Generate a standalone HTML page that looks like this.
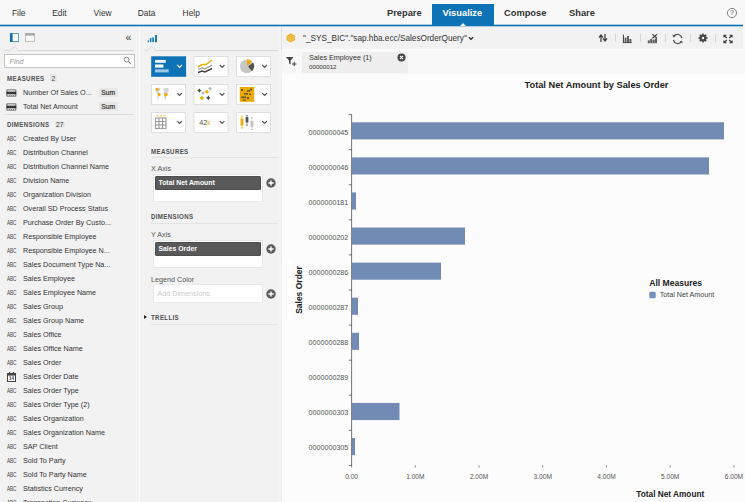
<!DOCTYPE html><html><head><meta charset="utf-8"><title>Visualize</title><style>
html,body{margin:0;padding:0}
body{width:745px;height:502px;overflow:hidden;position:relative;background:#f2f2f2;font-family:"Liberation Sans",Arial,sans-serif;color:#333;font-size:7.2px}
.a{position:absolute;white-space:nowrap;line-height:1}
.menu{font-size:8.4px;top:9px;color:#333}
.tab{font-size:9.3px;font-weight:bold;top:8.9px;color:#333}
.li{left:23px;font-size:7.2px;color:#333}
.abc{left:6.9px;font-size:4.7px;color:#444;letter-spacing:-0.1px;transform:scaleY(1.38);transform-origin:0 0}
.hd{font-size:7.3px;font-weight:bold;color:#505050;letter-spacing:0.42px;transform:scaleX(0.84);transform-origin:0 50%}
.badge{font-size:6.7px;background:#e6e6e6;color:#444;border-radius:1.5px;text-align:center}
.btn{width:34px;height:19.5px;background:#fff;border:0.6px dotted #b8b8b8}
.lbl{font-size:7.2px;color:#555}
.box{background:#fff;border:0.6px solid #e9e9e9}
.pill{background:#595959;box-shadow:inset 0 0 0 0.6px #444;border-radius:2px;color:#fff;font-weight:bold;font-size:6.85px}
.plus{width:9.5px;height:9.5px;border-radius:50%;background:#555}
.ul{height:1px;background:#e3e3e3}
.ax{font-size:6.9px;color:#555}
</style></head><body>
<div class="a" style="left:0;top:0;width:745px;height:24px;background:#f8f8f8"></div>
<div class="a" style="left:0;top:24px;width:743px;height:1px;background:#adcde3"></div><div class="a" style="left:0;top:25px;width:743px;height:1px;background:#0d73b6"></div><div class="a" style="left:0;top:26px;width:743px;height:1px;background:#adcce0"></div>
<div class="a menu" style="left:12px">File</div>
<div class="a menu" style="left:52.2px">Edit</div>
<div class="a menu" style="left:93.6px">View</div>
<div class="a menu" style="left:137.7px">Data</div>
<div class="a menu" style="left:182.6px">Help</div>
<div class="a" style="left:432px;top:3.5px;width:61.5px;height:22.5px;background:#0d73b6"></div>
<div class="a" style="left:459.5px;top:23px;width:0;height:0;border-left:3.5px solid transparent;border-right:3.5px solid transparent;border-bottom:3.5px solid #f2f2f2"></div>
<div class="a tab" style="left:387px;color:#333">Prepare</div>
<div class="a tab" style="left:442.5px;color:#fff">Visualize</div>
<div class="a tab" style="left:504px;color:#333">Compose</div>
<div class="a tab" style="left:569px;color:#333">Share</div>
<svg class="a" style="left:726px;top:7px" width="12" height="12" viewBox="0 0 12 12"><circle cx="6" cy="6" r="4.6" fill="none" stroke="#666" stroke-width="0.8"/><text x="6" y="8.4" font-size="6.8" text-anchor="middle" fill="#555" font-family="Liberation Sans, sans-serif">?</text></svg>
<div class="a" style="left:743px;top:24px;width:2px;height:27px;background:#f9f9f9"></div>
<div class="a" style="left:139px;top:27px;width:1px;height:475px;background:#fbfbfb"></div>
<div class="a" style="left:278px;top:27px;width:3px;height:475px;background:#f4f4f4"></div>
<div class="a" style="left:281px;top:27px;width:1px;height:23px;background:#dedede"></div><div class="a" style="left:281px;top:50px;width:1px;height:452px;background:#f0f0f0"></div>
<svg class="a" style="left:7px;top:31px" width="32" height="14" viewBox="0 0 32 14"><rect x="3.4" y="2.6" width="8" height="8" fill="#fff" stroke="#4a94cc" stroke-width="0.95"/><rect x="3" y="2.2" width="2.6" height="8.8" fill="#0d73b6"/><rect x="18.4" y="2.6" width="9.2" height="8" fill="#f8f8f8" stroke="#b5b5b5" stroke-width="0.8"/><rect x="18" y="2.2" width="10" height="2.4" fill="#a8a8a8"/></svg>
<div class="a" style="left:125.6px;top:31.6px;font-size:10.5px;color:#3a3a3a">&#171;</div>
<svg class="a" style="left:4px;top:46px" width="130" height="6" viewBox="0 0 130 6"><polyline points="0,4.6 6.0,4.6 10.4,0.6 14.8,4.6 130,4.6" fill="none" stroke="#d6d6d6" stroke-width="0.95"/></svg>
<div class="a" style="left:4px;top:54px;width:129px;height:12px;background:#fff;border:0.8px solid #c4c4c4"></div>
<div class="a" style="left:9.5px;top:57.5px;font-size:7.2px;font-style:italic;color:#999">Find</div>
<svg class="a" style="left:123px;top:56px" width="9" height="9" viewBox="0 0 9 9"><circle cx="3.6" cy="3.6" r="2.4" fill="none" stroke="#777" stroke-width="0.8"/><line x1="5.4" y1="5.4" x2="7.8" y2="7.8" stroke="#777" stroke-width="1.1"/></svg>
<div class="a hd" style="left:6.8px;top:74.7px">MEASURES</div>
<div class="a badge" style="left:50px;top:74.3px;width:6.8px;height:7.6px;line-height:9px;overflow:hidden">2</div>
<svg class="a" style="left:6px;top:88.6px" width="11" height="8" viewBox="0 0 11 8"><rect x="0.9" y="0.9" width="9" height="6.2" fill="#fafafa" stroke="#333" stroke-width="0.7"/><rect x="0.6" y="2.6" width="9.6" height="2.7" fill="#2e2e2e"/><g fill="#999"><rect x="3" y="2.6" width="0.5" height="1"/><rect x="5.2" y="2.6" width="0.5" height="1"/><rect x="7.4" y="2.6" width="0.5" height="1"/></g><g fill="#333"><rect x="3" y="6" width="0.5" height="1"/><rect x="5.2" y="6" width="0.5" height="1"/><rect x="7.4" y="6" width="0.5" height="1"/></g></svg>
<div class="a li" style="top:88.8px">Number Of Sales O...</div>
<div class="a badge" style="left:99px;top:88.39999999999999px;width:18.5px;height:8.4px;line-height:9.8px;overflow:hidden;color:#333;-webkit-text-stroke:0.2px #333">Sum</div>
<svg class="a" style="left:6px;top:102.6px" width="11" height="8" viewBox="0 0 11 8"><rect x="0.9" y="0.9" width="9" height="6.2" fill="#fafafa" stroke="#333" stroke-width="0.7"/><rect x="0.6" y="2.6" width="9.6" height="2.7" fill="#2e2e2e"/><g fill="#999"><rect x="3" y="2.6" width="0.5" height="1"/><rect x="5.2" y="2.6" width="0.5" height="1"/><rect x="7.4" y="2.6" width="0.5" height="1"/></g><g fill="#333"><rect x="3" y="6" width="0.5" height="1"/><rect x="5.2" y="6" width="0.5" height="1"/><rect x="7.4" y="6" width="0.5" height="1"/></g></svg>
<div class="a li" style="top:102.8px">Total Net Amount</div>
<div class="a badge" style="left:99px;top:102.39999999999999px;width:18.5px;height:8.4px;line-height:9.8px;overflow:hidden;color:#333;-webkit-text-stroke:0.2px #333">Sum</div>
<div class="a ul" style="left:4px;top:114.2px;width:130px;background:#dedede"></div>
<div class="a hd" style="left:6.8px;top:120.8px">DIMENSIONS</div>
<div class="a badge" style="left:54.5px;top:120.6px;width:10.5px;height:7.6px;line-height:8.4px;overflow:hidden">27</div>
<div class="a abc" style="top:136.7px">ABC</div>
<div class="a li" style="top:135.29999999999998px">Created By User</div>
<div class="a abc" style="top:150.7px">ABC</div>
<div class="a li" style="top:149.29999999999998px">Distribution Channel</div>
<div class="a abc" style="top:164.7px">ABC</div>
<div class="a li" style="top:163.29999999999998px">Distribution Channel Name</div>
<div class="a abc" style="top:178.7px">ABC</div>
<div class="a li" style="top:177.29999999999998px">Division Name</div>
<div class="a abc" style="top:192.7px">ABC</div>
<div class="a li" style="top:191.29999999999998px">Organization Division</div>
<div class="a abc" style="top:206.7px">ABC</div>
<div class="a li" style="top:205.29999999999998px">Overall SD Process Status</div>
<div class="a abc" style="top:220.7px">ABC</div>
<div class="a li" style="top:219.29999999999998px">Purchase Order By Custo...</div>
<div class="a abc" style="top:234.7px">ABC</div>
<div class="a li" style="top:233.29999999999998px">Responsible Employee</div>
<div class="a abc" style="top:248.7px">ABC</div>
<div class="a li" style="top:247.29999999999998px">Responsible Employee N...</div>
<div class="a abc" style="top:262.70000000000005px">ABC</div>
<div class="a li" style="top:261.3px">Sales Document Type Na...</div>
<div class="a abc" style="top:276.70000000000005px">ABC</div>
<div class="a li" style="top:275.3px">Sales Employee</div>
<div class="a abc" style="top:290.70000000000005px">ABC</div>
<div class="a li" style="top:289.3px">Sales Employee Name</div>
<div class="a abc" style="top:304.70000000000005px">ABC</div>
<div class="a li" style="top:303.3px">Sales Group</div>
<div class="a abc" style="top:318.70000000000005px">ABC</div>
<div class="a li" style="top:317.3px">Sales Group Name</div>
<div class="a abc" style="top:332.70000000000005px">ABC</div>
<div class="a li" style="top:331.3px">Sales Office</div>
<div class="a abc" style="top:346.70000000000005px">ABC</div>
<div class="a li" style="top:345.3px">Sales Office Name</div>
<div class="a abc" style="top:360.70000000000005px">ABC</div>
<div class="a li" style="top:359.3px">Sales Order</div>
<svg class="a" style="left:6.5px;top:372.1px" width="9" height="10" viewBox="0 0 9 10"><rect x="0.5" y="1.5" width="8" height="8" fill="#fff" stroke="#444" stroke-width="1"/><rect x="0" y="1" width="9" height="2.6" fill="#444"/><rect x="2" y="0" width="1.2" height="2" fill="#444"/><rect x="5.8" y="0" width="1.2" height="2" fill="#444"/><text x="4.5" y="8.3" font-size="4.6" font-weight="bold" text-anchor="middle" fill="#444" font-family="Liberation Sans, sans-serif">14</text></svg>
<div class="a li" style="top:373.3px">Sales Order Date</div>
<div class="a abc" style="top:388.70000000000005px">ABC</div>
<div class="a li" style="top:387.3px">Sales Order Type</div>
<div class="a abc" style="top:402.70000000000005px">ABC</div>
<div class="a li" style="top:401.3px">Sales Order Type (2)</div>
<div class="a abc" style="top:416.70000000000005px">ABC</div>
<div class="a li" style="top:415.3px">Sales Organization</div>
<div class="a abc" style="top:430.70000000000005px">ABC</div>
<div class="a li" style="top:429.3px">Sales Organization Name</div>
<div class="a abc" style="top:444.70000000000005px">ABC</div>
<div class="a li" style="top:443.3px">SAP Client</div>
<div class="a abc" style="top:458.70000000000005px">ABC</div>
<div class="a li" style="top:457.3px">Sold To Party</div>
<div class="a abc" style="top:472.70000000000005px">ABC</div>
<div class="a li" style="top:471.3px">Sold To Party Name</div>
<div class="a abc" style="top:486.70000000000005px">ABC</div>
<div class="a li" style="top:485.3px">Statistics Currency</div>
<div class="a abc" style="top:500.70000000000005px">ABC</div>
<div class="a li" style="top:499.3px">Transaction Currency</div>
<svg class="a" style="left:147px;top:33px" width="12" height="11" viewBox="0 0 12 11"><g fill="#0d73b6"><rect x="0.8" y="7.4" width="1.2" height="1.8"/><rect x="2.9" y="5" width="1.5" height="4.2"/><rect x="5.3" y="4.4" width="1.6" height="4.8"/><rect x="8.1" y="2" width="1.9" height="7.2"/></g></svg>
<svg class="a" style="left:145px;top:46px" width="133" height="6" viewBox="0 0 133 6"><polyline points="0,4.6 2.199999999999994,4.6 6.599999999999994,0.6 10.999999999999995,4.6 133,4.6" fill="none" stroke="#d6d6d6" stroke-width="0.95"/></svg>
<svg class="a" style="left:140px;top:50px" width="140" height="90" viewBox="140 50 140 90"><rect x="151.2" y="56.3" width="34.9" height="20.5" fill="#0d73b6"/><polyline points="177.30,65.00 179.60,67.40 181.90,65.00" fill="none" stroke="#fff" stroke-width="1.15"/><rect x="194.0" y="56.599999999999994" width="34" height="19.9" fill="#fff" stroke="#cfcfcf" stroke-width="0.6"/><polyline points="219.80,65.00 222.10,67.40 224.40,65.00" fill="none" stroke="#505050" stroke-width="1.15"/><rect x="236.5" y="56.599999999999994" width="34" height="19.9" fill="#fff" stroke="#cfcfcf" stroke-width="0.6"/><polyline points="262.30,65.00 264.60,67.40 266.90,65.00" fill="none" stroke="#505050" stroke-width="1.15"/><rect x="151.5" y="84.64999999999999" width="34" height="19.9" fill="#fff" stroke="#cfcfcf" stroke-width="0.6"/><polyline points="177.30,93.05 179.60,95.45 181.90,93.05" fill="none" stroke="#505050" stroke-width="1.15"/><rect x="194.0" y="84.64999999999999" width="34" height="19.9" fill="#fff" stroke="#cfcfcf" stroke-width="0.6"/><polyline points="219.80,93.05 222.10,95.45 224.40,93.05" fill="none" stroke="#505050" stroke-width="1.15"/><rect x="236.5" y="84.64999999999999" width="34" height="19.9" fill="#fff" stroke="#cfcfcf" stroke-width="0.6"/><polyline points="262.30,93.05 264.60,95.45 266.90,93.05" fill="none" stroke="#505050" stroke-width="1.15"/><rect x="151.5" y="112.7" width="34" height="19.9" fill="#fff" stroke="#cfcfcf" stroke-width="0.6"/><polyline points="177.30,121.10 179.60,123.50 181.90,121.10" fill="none" stroke="#505050" stroke-width="1.15"/><rect x="194.0" y="112.7" width="34" height="19.9" fill="#fff" stroke="#cfcfcf" stroke-width="0.6"/><polyline points="219.80,121.10 222.10,123.50 224.40,121.10" fill="none" stroke="#505050" stroke-width="1.15"/><rect x="236.5" y="112.7" width="34" height="19.9" fill="#fff" stroke="#cfcfcf" stroke-width="0.6"/><polyline points="262.30,121.10 264.60,123.50 266.90,121.10" fill="none" stroke="#505050" stroke-width="1.15"/></svg>
<svg class="a" style="left:154px;top:59px" width="18" height="15" viewBox="0 0 18 15"><rect x="1" y="0.9" width="10.8" height="2.9" fill="#fff" opacity="0.92"/><rect x="1" y="5.5" width="8.4" height="3.1" fill="#fff"/><rect x="1" y="10.3" width="13.7" height="3.1" fill="#9cc8e6"/></svg>
<svg class="a" style="left:196.5px;top:59px" width="18" height="15" viewBox="0 0 18 15"><polyline points="1,8 5,5.5 9,5.5 15,1" fill="none" stroke="#f0ab00" stroke-width="1.5"/><polyline points="1,10.5 5,9 8,10 15,6" fill="none" stroke="#999" stroke-width="1.2"/><polyline points="1,13.5 5,12 8,13 15,9.5" fill="none" stroke="#444" stroke-width="1.4"/></svg>
<svg class="a" style="left:239px;top:59px" width="18" height="15" viewBox="0 0 18 15"><circle cx="7.8" cy="7.4" r="6.8" fill="#c6c6c6"/><path d="M8,7 L8,0.2 A7,7 0 0 1 13,2.4 Z" fill="#f0ab00"/><path d="M9,7.6 L14,3.4 A6.8,6.8 0 0 1 13,12.2 Z" fill="#555"/></svg>
<svg class="a" style="left:154px;top:87px" width="18" height="15" viewBox="0 0 18 15"><path d="M1.2,1.2 L6.6,0.8 L6,3.2 L4.6,4.6 L5.4,6 L5.6,8.6 L4.6,10.6 L4,12.6 L3.2,12.6 L3.4,8 L2.4,5.4 L1.2,3.4 Z" fill="#d6d6d6"/><path d="M9,2 L11.6,0.8 L14.6,1 L14.8,4 L13.6,5.4 L14,7.6 L12.2,9 L11.8,12.4 L10.6,12.4 L10.2,8 L9.2,6 L10,4 Z" fill="#d6d6d6"/><circle cx="3.2" cy="2.2" r="1.4" fill="#f0ab00"/><circle cx="5.2" cy="7.6" r="1.5" fill="#f0ab00"/><circle cx="11.8" cy="7.8" r="1.8" fill="#f0ab00"/></svg>
<svg class="a" style="left:196.5px;top:87px" width="18" height="15" viewBox="0 0 18 15"><path d="M2.4,1.4 L3.324,2.676 L4.6,3.6 L3.324,4.524 L2.4,5.800000000000001 L1.476,4.524 L0.19999999999999973,3.6 L1.476,2.676 Z" fill="#4a4a4a"/><path d="M6,4 L6.84,5.16 L8,6 L6.84,6.84 L6,8 L5.16,6.84 L4,6 L5.16,5.16 Z" fill="#b4b4b4"/><path d="M9.9,2.4000000000000004 L10.866,3.7340000000000004 L12.2,4.7 L10.866,5.666 L9.9,7.0 L8.934000000000001,5.666 L7.6000000000000005,4.7 L8.934000000000001,3.7340000000000004 Z" fill="#f0ab00"/><path d="M13.1,-0.40000000000000013 L13.982,0.818 L15.2,1.7 L13.982,2.582 L13.1,3.8 L12.218,2.582 L11.0,1.7 L12.218,0.818 Z" fill="#b8b8c4"/><path d="M4.8,8.7 L5.808,10.091999999999999 L7.199999999999999,11.1 L5.808,12.108 L4.8,13.5 L3.792,12.108 L2.4,11.1 L3.792,10.091999999999999 Z" fill="#f0ab00"/><path d="M11.3,8.600000000000001 L12.224,9.876000000000001 L13.5,10.8 L12.224,11.724 L11.3,13.0 L10.376000000000001,11.724 L9.100000000000001,10.8 L10.376000000000001,9.876000000000001 Z" fill="#4a4a4a"/></svg>
<svg class="a" style="left:239px;top:87px" width="18" height="15" viewBox="0 0 18 15"><rect x="0.8" y="-0.2" width="14.4" height="15" fill="#eba800"/><g fill="#6b5a2a"><rect x="2" y="2" width="2" height="2"/><rect x="8" y="3" width="3" height="1.6"/><rect x="11" y="1.5" width="2" height="2"/><rect x="5" y="6" width="4" height="1.6"/><rect x="10" y="6.5" width="2" height="1.5"/><rect x="2" y="9.5" width="5" height="1.6"/><rect x="8" y="10" width="2" height="2"/><rect x="4" y="12.5" width="3" height="1.2"/></g></svg>
<svg class="a" style="left:154px;top:115px" width="18" height="15" viewBox="0 0 18 15"><g stroke="#f0ab00" stroke-width="0.9"><line x1="2.5" y1="0.8" x2="4.5" y2="0.8"/><line x1="6" y1="0.8" x2="8" y2="0.8"/><line x1="9.5" y1="0.8" x2="11.5" y2="0.8"/></g><g fill="none" stroke="#a0a0a0" stroke-width="1.15"><rect x="1.5" y="3" width="10.5" height="10.5"/><line x1="5" y1="3" x2="5" y2="13.5"/><line x1="8.5" y1="3" x2="8.5" y2="13.5"/><line x1="1.5" y1="6.5" x2="12" y2="6.5"/><line x1="1.5" y1="10" x2="12" y2="10"/></g></svg>
<div class="a" style="left:199.3px;top:118.7px;font-size:7.2px;color:#555">42<span style="color:#f0ab00;font-size:6.5px">k</span></div>
<svg class="a" style="left:239px;top:115px" width="18" height="15" viewBox="0 0 18 15"><path d="M3,1 V13 M1.8,1 H4.2 M1.8,13 H4.2" stroke="#f0ab00" stroke-width="0.6" fill="none"/><rect x="1.6" y="3.5" width="2.8" height="7" fill="#f0ab00"/><path d="M8,0.5 V10.2 M6.8,0.5 H9.2 M6.8,10.2 H9.2" stroke="#555" stroke-width="0.6" fill="none"/><rect x="6.6" y="2" width="2.8" height="5.5" fill="#555"/><path d="M13,2.5 V14.5 M11.8,2.5 H14.2 M11.8,14.5 H14.2" stroke="#b4b4b4" stroke-width="0.6" fill="none"/><rect x="11.6" y="6" width="2.8" height="5.8" fill="#c2c2c2"/></svg>
<div class="a hd" style="left:151px;top:147.5px">MEASURES</div>
<div class="a ul" style="left:151px;top:157px;width:127px"></div>
<div class="a lbl" style="left:151px;top:164.5px">X Axis</div>
<div class="a box" style="left:153px;top:174px;width:108.4px;height:25.6px"></div>
<div class="a pill" style="left:155px;top:176px;width:106px;height:14px;line-height:14px"><span style="margin-left:3.5px">Total Net Amount</span></div>
<svg class="a" style="left:265.5px;top:178.2px" width="10" height="10" viewBox="0 0 10 10"><circle cx="5" cy="5" r="4.7" fill="#5c5c5c"/><path d="M5,2.4 V7.6 M2.4,5 H7.6" stroke="#fff" stroke-width="1.4"/></svg>
<div class="a hd" style="left:151px;top:213px">DIMENSIONS</div>
<div class="a ul" style="left:151px;top:223px;width:127px"></div>
<div class="a lbl" style="left:151px;top:230.5px">Y Axis</div>
<div class="a box" style="left:153px;top:240px;width:108.4px;height:25.6px"></div>
<div class="a pill" style="left:155px;top:242px;width:106px;height:14px;line-height:14px"><span style="margin-left:3.5px">Sales Order</span></div>
<svg class="a" style="left:265.5px;top:244px" width="10" height="10" viewBox="0 0 10 10"><circle cx="5" cy="5" r="4.7" fill="#5c5c5c"/><path d="M5,2.4 V7.6 M2.4,5 H7.6" stroke="#fff" stroke-width="1.4"/></svg>
<div class="a lbl" style="left:151px;top:275.5px">Legend Color</div>
<div class="a box" style="left:153px;top:284.2px;width:108.4px;height:16.8px"></div>
<div class="a" style="left:157.5px;top:290px;font-size:7.2px;color:#ccc">Add Dimensions</div>
<svg class="a" style="left:265.5px;top:288.5px" width="10" height="10" viewBox="0 0 10 10"><circle cx="5" cy="5" r="4.7" fill="#5c5c5c"/><path d="M5,2.4 V7.6 M2.4,5 H7.6" stroke="#fff" stroke-width="1.4"/></svg>
<div class="a" style="left:143.5px;top:315px;width:0;height:0;border-top:2.2px solid transparent;border-bottom:2.2px solid transparent;border-left:3px solid #222"></div>
<div class="a hd" style="left:151px;top:314px">TRELLIS</div>
<div class="a ul" style="left:151px;top:324px;width:127px"></div>
<div class="a" style="left:282px;top:48px;width:463px;height:1px;background:#f4f4f4"></div><div class="a" style="left:282px;top:49px;width:463px;height:2px;background:#fbfbfb"></div>
<div class="a" style="left:282px;top:51px;width:463px;height:23px;background:#f8f8f8"></div>
<div class="a" style="left:282px;top:74px;width:463px;height:428px;background:#fcfcfc"></div>
<svg class="a" style="left:286.4px;top:33.4px" width="9.6" height="10" viewBox="0 0 11 11"><path d="M5.5,0.3 L10.2,2.9 L10.2,8.1 L5.5,10.7 L0.8,8.1 L0.8,2.9 Z" fill="#e9a915"/><path d="M5.5,5.5 V10.5 M0.9,3 L5.5,5.5 L10.1,3" fill="none" stroke="#f7dc9a" stroke-width="0.7"/><path d="M3.2,1.7 L7.8,4.2 V9.2 M7.8,1.7 L3.2,4.2 V9.2 M0.9,5.6 L5.5,8.1 L10.1,5.6" fill="none" stroke="#f7dc9a" stroke-width="0.45"/></svg>
<div class="a" style="left:303px;top:35.3px;font-size:8.22px;color:#333">"_SYS_BIC"."sap.hba.ecc/SalesOrderQuery"</div>
<svg class="a" style="left:468px;top:35.6px" width="6" height="5" viewBox="0 0 7 6"><polyline points="1,1.5 3.5,4 6,1.5" fill="none" stroke="#222" stroke-width="1.5"/></svg>
<div class="a" style="left:615px;top:34px;width:1px;height:8px;background:#d6d6d6"></div>
<div class="a" style="left:640px;top:34px;width:1px;height:8px;background:#d6d6d6"></div>
<div class="a" style="left:665px;top:34px;width:1px;height:8px;background:#d6d6d6"></div>
<div class="a" style="left:690px;top:34px;width:1px;height:8px;background:#d6d6d6"></div>
<div class="a" style="left:715px;top:34px;width:1px;height:8px;background:#d6d6d6"></div>
<svg class="a" style="left:598px;top:33px" width="10" height="10" viewBox="0 0 10 10"><path d="M3,9 V2.5 M1,4.5 L3,2 L5,4.5" fill="none" stroke="#444" stroke-width="1.3"/><path d="M7,1 V7.5 M5,5.5 L7,8 L9,5.5" fill="none" stroke="#444" stroke-width="1.3"/></svg>
<svg class="a" style="left:622px;top:33px" width="11" height="11" viewBox="0 0 11 11"><g fill="#4a4a4a"><rect x="0.9" y="1.6" width="1.1" height="8.4"/><rect x="2.6" y="4.6" width="2" height="5.4" opacity="0.85"/><rect x="5" y="3" width="2" height="7" opacity="0.85"/><rect x="7.4" y="6" width="2" height="4" opacity="0.85"/><rect x="0.9" y="9.2" width="8.6" height="0.9"/></g></svg>
<svg class="a" style="left:647px;top:33px" width="11" height="11" viewBox="0 0 11 11"><g fill="#4a4a4a" opacity="0.9"><rect x="0.8" y="7.4" width="2" height="2.8"/><rect x="3.2" y="5.8" width="2" height="4.4"/><rect x="5.6" y="6.6" width="2" height="3.6"/><rect x="8" y="5.4" width="2" height="4.8"/></g><path d="M5.4,1.4 L10,5.2 M10,1.4 L5.4,5.2" stroke="#3a3a3a" stroke-width="1.2"/></svg>
<svg class="a" style="left:671.3px;top:32.6px" width="13.2" height="12" viewBox="0 0 11 10"><path d="M9,4.2 A3.7,3.7 0 0 0 2.2,3" fill="none" stroke="#555" stroke-width="1"/><path d="M2,5.8 A3.7,3.7 0 0 0 8.8,7" fill="none" stroke="#555" stroke-width="1"/><path d="M1.2,1.2 L1.8,3.6 L4,3 Z M9.8,8.8 L9.2,6.4 L7,7 Z" fill="#555"/></svg>
<svg class="a" style="left:698px;top:33px" width="10" height="10" viewBox="0 0 10 10"><circle cx="5" cy="5" r="2.6" fill="none" stroke="#444" stroke-width="1.9"/><g stroke="#444" stroke-width="1.5"><line x1="5" y1="0.5" x2="5" y2="9.5"/><line x1="0.5" y1="5" x2="9.5" y2="5"/><line x1="1.8" y1="1.8" x2="8.2" y2="8.2"/><line x1="8.2" y1="1.8" x2="1.8" y2="8.2"/></g><circle cx="5" cy="5" r="1.2" fill="#f2f2f2"/></svg>
<svg class="a" style="left:723.4px;top:33.6px" width="10" height="10" viewBox="0 0 10 10"><g fill="none" stroke="#3a3a3a" stroke-width="1.05"><path d="M0.9,3.6 V1.3 H3.4 M1.1,1.5 L3.9,4"/><path d="M9.1,3.6 V1.3 H6.6 M8.9,1.5 L6.1,4"/><path d="M0.9,6.4 V8.7 H3.4 M1.1,8.5 L3.9,6"/><path d="M9.1,6.4 V8.7 H6.6 M8.9,8.5 L6.1,6"/></g></svg>
<svg class="a" style="left:284.5px;top:56px" width="12" height="11" viewBox="0 0 12 11"><path d="M1,1 H8.5 L5.6,4.5 V8.5 L4,7.2 V4.5 Z" fill="#444"/><path d="M9.2,5.8 V10.2 M7,8 H11.4" stroke="#444" stroke-width="1"/></svg>
<div class="a" style="left:302px;top:51.5px;width:106px;height:21.5px;background:#eeeeee;border-radius:1.5px"></div>
<div class="a" style="left:309px;top:54px;font-size:7.2px;color:#333">Sales Employee (1)</div>
<div class="a" style="left:309px;top:64.1px;font-size:6.2px;color:#333">00000012</div>
<svg class="a" style="left:397.4px;top:52.8px" width="9" height="9" viewBox="0 0 9 9"><circle cx="4.5" cy="4.5" r="4" fill="#444"/><path d="M2.9,2.9 L6.1,6.1 M6.1,2.9 L2.9,6.1" stroke="#fff" stroke-width="1.1"/></svg>
<div class="a" style="left:446.5px;top:81px;width:300px;text-align:center;font-size:9.25px;font-weight:bold;color:#222">Total Net Amount by Sales Order</div>
<div class="a" style="left:287.2px;top:259.6px;width:5.2px;height:61.4px;background:#fff"></div>
<div class="a" style="left:299.2px;top:290px;font-size:8.5px;font-weight:bold;color:#222;transform:translate(-50%,-50%) rotate(-90deg)">Sales Order</div>
<svg class="a" style="left:282px;top:74px" width="463" height="428" viewBox="282 74 463 428"><line x1="351.6" y1="114.19999999999999" x2="351.6" y2="466.0" stroke="#4a4a4a" stroke-width="0.75"/><line x1="348.8" y1="114.60" x2="351.6" y2="114.60" stroke="#4a4a4a" stroke-width="0.75"/><line x1="348.8" y1="149.68" x2="351.6" y2="149.68" stroke="#4a4a4a" stroke-width="0.75"/><line x1="348.8" y1="184.76" x2="351.6" y2="184.76" stroke="#4a4a4a" stroke-width="0.75"/><line x1="348.8" y1="219.84" x2="351.6" y2="219.84" stroke="#4a4a4a" stroke-width="0.75"/><line x1="348.8" y1="254.92" x2="351.6" y2="254.92" stroke="#4a4a4a" stroke-width="0.75"/><line x1="348.8" y1="290.00" x2="351.6" y2="290.00" stroke="#4a4a4a" stroke-width="0.75"/><line x1="348.8" y1="325.08" x2="351.6" y2="325.08" stroke="#4a4a4a" stroke-width="0.75"/><line x1="348.8" y1="360.16" x2="351.6" y2="360.16" stroke="#4a4a4a" stroke-width="0.75"/><line x1="348.8" y1="395.24" x2="351.6" y2="395.24" stroke="#4a4a4a" stroke-width="0.75"/><line x1="348.8" y1="430.32" x2="351.6" y2="430.32" stroke="#4a4a4a" stroke-width="0.75"/><line x1="348.8" y1="465.40" x2="351.6" y2="465.40" stroke="#4a4a4a" stroke-width="0.75"/><rect x="352" y="122.30" width="372" height="17.1" fill="#718bb5"/><text x="348.3" y="134.70" font-size="7.15" text-anchor="end" fill="#555" font-family="Liberation Sans, sans-serif">0000000045</text><rect x="352" y="157.38" width="357" height="17.1" fill="#718bb5"/><text x="348.3" y="169.78" font-size="7.15" text-anchor="end" fill="#555" font-family="Liberation Sans, sans-serif">0000000046</text><rect x="352" y="192.46" width="4" height="17.1" fill="#718bb5"/><text x="348.3" y="204.86" font-size="7.15" text-anchor="end" fill="#555" font-family="Liberation Sans, sans-serif">0000000181</text><rect x="352" y="227.54" width="113" height="17.1" fill="#718bb5"/><text x="348.3" y="239.94" font-size="7.15" text-anchor="end" fill="#555" font-family="Liberation Sans, sans-serif">0000000202</text><rect x="352" y="262.62" width="89" height="17.1" fill="#718bb5"/><text x="348.3" y="275.02" font-size="7.15" text-anchor="end" fill="#555" font-family="Liberation Sans, sans-serif">0000000286</text><rect x="352" y="297.70" width="6" height="17.1" fill="#718bb5"/><text x="348.3" y="310.10" font-size="7.15" text-anchor="end" fill="#555" font-family="Liberation Sans, sans-serif">0000000287</text><rect x="352" y="332.78" width="7" height="17.1" fill="#718bb5"/><text x="348.3" y="345.18" font-size="7.15" text-anchor="end" fill="#555" font-family="Liberation Sans, sans-serif">0000000288</text><rect x="352" y="367.86" width="0" height="17.1" fill="#718bb5"/><text x="348.3" y="380.26" font-size="7.15" text-anchor="end" fill="#555" font-family="Liberation Sans, sans-serif">0000000289</text><rect x="352" y="402.94" width="47.5" height="17.1" fill="#718bb5"/><text x="348.3" y="415.34" font-size="7.15" text-anchor="end" fill="#555" font-family="Liberation Sans, sans-serif">0000000303</text><rect x="352" y="438.02" width="3" height="17.1" fill="#718bb5"/><text x="348.3" y="450.42" font-size="7.15" text-anchor="end" fill="#555" font-family="Liberation Sans, sans-serif">0000000305</text><line x1="351.60" y1="465.2" x2="351.60" y2="467.6" stroke="#666" stroke-width="0.7"/><text x="351.60" y="478.5" font-size="6.6" text-anchor="middle" fill="#555" font-family="Liberation Sans, sans-serif">0.00</text><line x1="415.32" y1="465.2" x2="415.32" y2="467.6" stroke="#666" stroke-width="0.7"/><text x="415.32" y="478.5" font-size="6.6" text-anchor="middle" fill="#555" font-family="Liberation Sans, sans-serif">1.00M</text><line x1="479.04" y1="465.2" x2="479.04" y2="467.6" stroke="#666" stroke-width="0.7"/><text x="479.04" y="478.5" font-size="6.6" text-anchor="middle" fill="#555" font-family="Liberation Sans, sans-serif">2.00M</text><line x1="542.76" y1="465.2" x2="542.76" y2="467.6" stroke="#666" stroke-width="0.7"/><text x="542.76" y="478.5" font-size="6.6" text-anchor="middle" fill="#555" font-family="Liberation Sans, sans-serif">3.00M</text><line x1="606.48" y1="465.2" x2="606.48" y2="467.6" stroke="#666" stroke-width="0.7"/><text x="606.48" y="478.5" font-size="6.6" text-anchor="middle" fill="#555" font-family="Liberation Sans, sans-serif">4.00M</text><line x1="670.20" y1="465.2" x2="670.20" y2="467.6" stroke="#666" stroke-width="0.7"/><text x="670.20" y="478.5" font-size="6.6" text-anchor="middle" fill="#555" font-family="Liberation Sans, sans-serif">5.00M</text><line x1="733.92" y1="465.2" x2="733.92" y2="467.6" stroke="#666" stroke-width="0.7"/><text x="733.92" y="478.5" font-size="6.6" text-anchor="middle" fill="#555" font-family="Liberation Sans, sans-serif">6.00M</text><text x="636.3" y="496.6" font-size="8.28" font-weight="bold" fill="#222" font-family="Liberation Sans, sans-serif">Total Net Amount</text><text x="649.3" y="286" font-size="8.55" font-weight="bold" fill="#222" font-family="Liberation Sans, sans-serif">All Measures</text><rect x="649.3" y="291.8" width="6.4" height="6.4" rx="1.2" fill="#7691bd"/><text x="659.7" y="297.4" font-size="7.18" fill="#444" font-family="Liberation Sans, sans-serif">Total Net Amount</text></svg>
</body></html>
